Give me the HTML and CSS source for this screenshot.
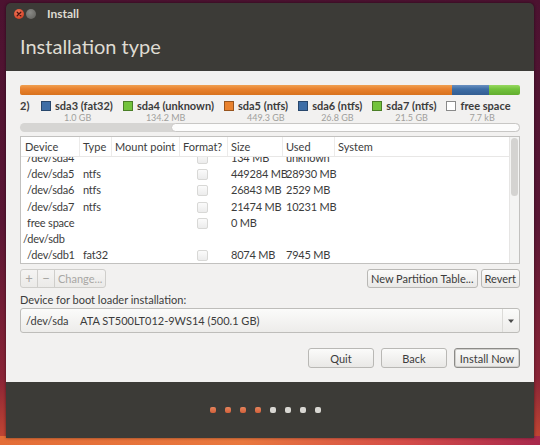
FILE: index.html
```html
<!DOCTYPE html>
<html>
<head>
    <title>Install</title>
    <link rel="stylesheet" href="styles.css">
</head>
<body>
    <div class="window">
        <div class="titlebar">
            <span class="wbtn close">
                <svg width="10" height="10" viewBox="0 0 10 10"><path d="M3.2 3.2 L6.8 6.8 M6.8 3.2 L3.2 6.8" stroke="#4a1410" stroke-width="1.3" stroke-linecap="round"/></svg>
            </span>
            <span class="wbtn min"></span>
            <span class="title">Install</span>
        </div>
        <div class="header">
            <h1>Installation type</h1>
        </div>

        <div class="content">
            <!-- disk usage bar -->
            <div class="disk-bar">
                <span class="seg orange" style="width: 432px"></span>
                <span class="seg blue" style="width: 37px"></span>
                <span class="seg green" style="width: 31px"></span>
            </div>

            <div class="legend">
                <span class="cut">2)</span>
                <div class="item">
                    <span class="swatch blue"></span>
                    <div><div class="name">sda3 (fat32)</div><div class="size">1.0 GB</div></div>
                </div>
                <div class="item">
                    <span class="swatch green"></span>
                    <div><div class="name">sda4 (unknown)</div><div class="size">134.2 MB</div></div>
                </div>
                <div class="item">
                    <span class="swatch orange"></span>
                    <div><div class="name">sda5 (ntfs)</div><div class="size">449.3 GB</div></div>
                </div>
                <div class="item">
                    <span class="swatch blue"></span>
                    <div><div class="name">sda6 (ntfs)</div><div class="size">26.8 GB</div></div>
                </div>
                <div class="item">
                    <span class="swatch green"></span>
                    <div><div class="name">sda7 (ntfs)</div><div class="size">21.5 GB</div></div>
                </div>
                <div class="item">
                    <span class="swatch free"></span>
                    <div><div class="name">free space</div><div class="size">7.7 kB</div></div>
                </div>
            </div>

            <div class="hscroll"><div class="hthumb"></div></div>

            <!-- partition table -->
            <div class="table">
                <div class="table-main">
                    <div class="rows">
                        <div class="rows-inner">
                            <div class="row"><span class="dev">/dev/sda4</span><span></span><span></span><span><i class="check"></i></span><span>134 MB</span><span>unknown</span><span></span></div>
                            <div class="row"><span class="dev">/dev/sda5</span><span>ntfs</span><span></span><span><i class="check"></i></span><span>449284 MB</span><span>28930 MB</span><span></span></div>
                            <div class="row"><span class="dev">/dev/sda6</span><span>ntfs</span><span></span><span><i class="check"></i></span><span>26843 MB</span><span>2529 MB</span><span></span></div>
                            <div class="row"><span class="dev">/dev/sda7</span><span>ntfs</span><span></span><span><i class="check"></i></span><span>21474 MB</span><span>10231 MB</span><span></span></div>
                            <div class="row"><span class="dev">free space</span><span></span><span></span><span><i class="check"></i></span><span>0 MB</span><span></span><span></span></div>
                            <div class="row"><span class="disk">/dev/sdb</span><span></span><span></span><span></span><span></span><span></span><span></span></div>
                            <div class="row"><span class="dev">/dev/sdb1</span><span>fat32</span><span></span><span><i class="check"></i></span><span>8074 MB</span><span>7945 MB</span><span></span></div>
                        </div>
                    </div>
                    <!-- header sits over the scrolled rows -->
                    <div class="row head">
                        <span>Device</span>
                        <span>Type</span>
                        <span>Mount point</span>
                        <span>Format?</span>
                        <span>Size</span>
                        <span>Used</span>
                        <span>System</span>
                    </div>
                </div>
                <div class="vscroll"><div class="vthumb"></div></div>
            </div>

            <div class="table-tools">
                <div class="group">
                    <button class="btn small" disabled>+</button>
                    <button class="btn small" disabled>&minus;</button>
                    <button class="btn tight" disabled>Change...</button>
                </div>
                <div class="right">
                    <button class="btn tight">New Partition Table...</button>
                    <button class="btn tight">Revert</button>
                </div>
            </div>

            <label class="boot-label">Device for boot loader installation:</label>
            <div class="combo">
                <span class="combo-dev">/dev/sda</span>
                <span class="combo-name">ATA ST500LT012-9WS14 (500.1 GB)</span>
                <span class="combo-arrow">
                    <svg width="8" height="6" viewBox="0 0 8 6"><path d="M1 1.5 L7 1.5 L4 5 Z" fill="#4a4a4a"/></svg>
                </span>
            </div>

            <div class="actions">
                <button class="btn wide">Quit</button>
                <button class="btn wide">Back</button>
                <button class="btn wide default">Install Now</button>
            </div>
        </div>

        <div class="footer">
            <span class="dot done"></span>
            <span class="dot done"></span>
            <span class="dot done"></span>
            <span class="dot done"></span>
            <span class="dot"></span>
            <span class="dot"></span>
            <span class="dot"></span>
            <span class="dot"></span>
        </div>
    </div>
</body>
</html>
```

FILE: styles.css
```css
body {
    margin: 0;
    width: 540px;
    height: 445px;
    overflow: hidden;
    font-family: Lato, "Noto Sans", sans-serif;
    font-size: 11px;
    color: #3c3c3c;
    background:
        linear-gradient(90deg, #e46e38 0%, #e9783e 45%, #d44c48 75%, #a8284c 100%) bottom / 100% 9px no-repeat,
        linear-gradient(180deg, #4c1230 0%, #5a1634 50%, #8a2436 85%, #c84a32 100%);
}

.window {
    margin: 3px 6px 0 6px;
    width: 528px;
    height: 435px;
    display: flex;
    flex-direction: column;
    background-color: #3c3b37;
    border-radius: 5px 5px 0 0;
    box-shadow: 0 0 3px rgba(0, 0, 0, 0.5);
    overflow: hidden;
}

/* title bar */
.titlebar {
    height: 21px;
    display: flex;
    align-items: center;
    padding-left: 8px;
}
.wbtn {
    width: 10px;
    height: 10px;
    border-radius: 50%;
    margin-right: 2px;
    display: flex;
}
.wbtn.close {
    background: radial-gradient(circle at 40% 35%, #f47a5c, #d5462a 70%, #b23a20);
}
.wbtn.min {
    background: radial-gradient(circle at 40% 35%, #8a8a86, #5e5d59);
}
.title {
    margin-left: 9px;
    color: #dfdbd2;
    font-weight: bold;
    font-size: 12px;
}

.header {
    height: 47px;
}
.header h1 {
    margin: 0;
    padding: 10px 0 0 14px;
    font-weight: normal;
    font-size: 20px;
    color: #dfdbd2;
}

/* main area */
.content {
    height: 311px;
    background-color: #f2f1f0;
    padding: 0 14px;
    display: flex;
    flex-direction: column;
}

.disk-bar {
    margin-top: 14px;
    height: 10px;
    display: flex;
    border-radius: 2px;
    overflow: hidden;
}
.seg.orange {
    background: linear-gradient(#f0a050, #e9822e 40%, #d8721e);
}
.seg.blue {
    background: linear-gradient(#6a90c0, #3e6ea6 40%, #335e92);
}
.seg.green {
    background: linear-gradient(#98d860, #73c33c 40%, #62ad2f);
}

.legend {
    margin-top: 4px;
    height: 24px;
    display: flex;
    white-space: nowrap;
}
.cut {
    flex-shrink: 0;
    font-weight: bold;
    width: 21px;
    line-height: 13px;
}
.item {
    flex-shrink: 0;
    display: flex;
    align-items: flex-start;
    margin-right: 10px;
}
.item:last-child {
    margin-right: 0;
}
.swatch {
    width: 8px;
    height: 8px;
    margin: 2px 4px 0 0;
    border: 1px solid rgba(0, 0, 0, 0.35);
}
.swatch.blue { background-color: #3e6ea6; }
.swatch.green { background-color: #73c33c; }
.swatch.orange { background-color: #e9822e; }
.swatch.free { background-color: #fff; border-color: #8a8a8a; }
.name {
    line-height: 13px;
    font-weight: bold;
}
.size {
    line-height: 11px;
    font-size: 9px;
    color: #a09f9c;
    padding-left: 9px;
}

.hscroll {
    height: 9px;
    background-color: #d6d5d3;
    border-radius: 5px;
    position: relative;
    margin-bottom: 4px;
}
.hthumb {
    position: absolute;
    left: 151px;
    right: 0;
    top: 0;
    bottom: 0;
    background-color: #fcfcfc;
    border: 1px solid #c8c7c5;
    border-radius: 5px;
}

/* partition table */
.table {
    height: 126px;
    display: flex;
    background-color: #fff;
    border: 1px solid #c2c1bf;
}
.table-main {
    flex: 1;
    position: relative;
    overflow: hidden;
}
.row {
    display: grid;
    grid-template-columns: 59px 32px 68px 48px 55px 52px 1fr;
    height: 16.2px;
    line-height: 16px;
    white-space: nowrap;
    letter-spacing: -0.2px;
}
.row.head {
    position: absolute;
    top: 0;
    left: 0;
    right: 0;
    height: 19px;
    line-height: 19px;
    letter-spacing: 0;
    background-color: #fff;
    border-bottom: 1px solid #e8e7e6;
}
.row.head span {
    padding-left: 3px;
    border-right: 1px solid #ecebea;
}
.row.head span:first-child {
    padding-left: 4px;
}
.row.head span:last-child {
    border-right: none;
}
.rows-inner {
    padding-top: 13px;
}
.row span {
    padding-left: 3px;
}
.row .dev {
    padding-left: 6px;
}
.row .disk {
    padding-left: 2px;
}
.check {
    display: block;
    width: 9px;
    height: 9px;
    margin: 3px 0 0 14px;
    border: 1px solid #d8d8d6;
    border-radius: 2px;
    background: linear-gradient(#fbfbfb, #ececec);
}
.vscroll {
    width: 9px;
    background-color: #f4f4f3;
    border-left: 1px solid #e6e5e4;
}
.vthumb {
    height: 58px;
    margin: 1px;
    background-color: #d4d3d1;
    border-radius: 4px;
}

.table-tools {
    margin-top: 5px;
    display: flex;
    justify-content: space-between;
}
.group {
    display: flex;
}
.group .btn {
    border-radius: 0;
    margin: 0;
    margin-left: -1px;
}
.group .btn:first-child {
    margin-left: 0;
    border-radius: 3px 0 0 3px;
}
.group .btn:last-child {
    border-radius: 0 3px 3px 0;
}
.right {
    display: flex;
    gap: 3px;
}

.btn {
    height: 19px;
    padding: 0 5px;
    font-family: inherit;
    font-size: 11px;
    color: #3c3c3c;
    white-space: nowrap;
    background: linear-gradient(#fbfbfa, #e9e8e6);
    border: 1px solid #b9b8b5;
    border-radius: 3px;
}
.btn.tight {
    padding: 0 3px;
}
.btn:disabled {
    color: #a8a7a4;
    background: linear-gradient(#f5f4f3, #ebeae8);
    border-color: #cfcecb;
}
.btn.small {
    width: 18px;
    padding: 0;
    font-size: 13px;
    line-height: 15px;
}

.boot-label {
    margin-top: 5px;
    line-height: 14px;
}

.combo {
    margin-top: 1px;
    height: 23px;
    display: flex;
    align-items: center;
    background: linear-gradient(#fbfbfa, #edecea);
    border: 1px solid #bebdba;
    border-radius: 3px;
}
.combo-dev {
    margin-left: 5px;
    width: 54px;
}
.combo-name {
    flex: 1;
}
.combo-arrow {
    width: 16px;
    height: 100%;
    display: flex;
    align-items: center;
    justify-content: center;
    border-left: 1px solid #dcdbd8;
}

.actions {
    margin-top: 15px;
    display: flex;
    justify-content: flex-end;
    gap: 7px;
}
.btn.wide {
    width: 66px;
    height: 20px;
    padding: 0;
}
.btn.default {
    border-color: #8c8b88;
    box-shadow: inset 0 0 0 1px #d0cfcc;
}

/* progress dots */
.footer {
    flex: 1;
    display: flex;
    justify-content: center;
    align-items: center;
    gap: 9px;
    padding-right: 10px;
}
.dot {
    width: 6px;
    height: 6px;
    border-radius: 2px;
    background-color: #d9d7d3;
}
.dot.done {
    background: linear-gradient(#e6845c, #d2603a);
}
```
